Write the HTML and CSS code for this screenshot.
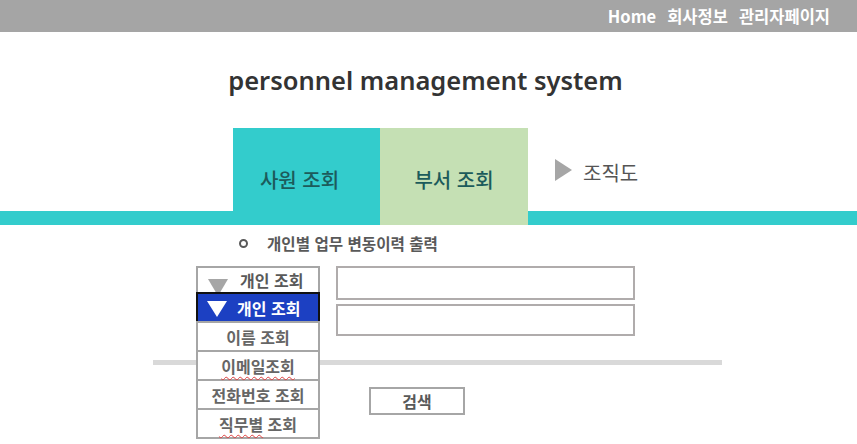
FILE: index.html
```html
<!DOCTYPE html>
<html lang="ko">
<head>
<meta charset="utf-8">
<title>personnel management system</title>
<link rel="stylesheet" href="styles.css">
</head>
<body>
<header class="topbar">
  <a class="toplink">Home</a>
  <a class="toplink">회사정보</a>
  <a class="toplink">관리자페이지</a>
</header>
<div class="title">personnel management system</div>
<nav class="nav">
  <div class="tab tab-teal">사원 조회</div>
  <div class="tab tab-green">부서 조회</div>
  <div class="tab tab-plain"><span class="play"></span>조직도</div>
</nav>
<main class="content">
  <div class="heading"><span class="ring"></span>개인별 업무 변동이력 출력</div>
  <div class="form-row">
    <div class="select">
      <div class="select-box"><span class="tri tri-gray"></span>개인 조회</div>
      <ul class="menu">
        <li class="opt opt-active"><span class="tri tri-white"></span>개인 조회</li>
        <li class="opt">이름 조회</li>
        <li class="opt"><span class="spell">이메일조회</span></li>
        <li class="opt">전화번호 조회</li>
        <li class="opt"><span><span class="spell">직무별</span> 조회</span></li>
      </ul>
    </div>
    <div class="inputs">
      <div class="field field-1"></div>
      <div class="field field-2"></div>
    </div>
  </div>
  <div class="divider"></div>
  <div class="btn-row"><div class="btn">검색</div></div>
</main>
</body>
</html>
```

FILE: styles.css
```css
* { box-sizing: border-box; }
html, body { min-height: 444px; }
body {
  margin: 0;
  font-family: "Noto Sans CJK KR", "Noto Sans", sans-serif;
  background: #fff;
  color: #333;
}
.topbar {
  height: 32px;
  background: #a5a5a5;
  display: flex;
  justify-content: flex-end;
  align-items: center;
  gap: 11px;
  padding-right: 27px;
}
.toplink {
  color: #fff;
  font-weight: 700;
  font-size: 16.5px;
  line-height: 1;
}
.title {
  height: 96px;
  display: flex;
  align-items: center;
  justify-content: center;
  font-family: "Noto Sans", "Noto Sans CJK KR", sans-serif;
  font-size: 25.5px;
  font-weight: 600;
  color: #333;
  padding-right: 6px;
}
.nav {
  height: 97px;
  display: flex;
  padding-left: 233px;
  background: linear-gradient(to top, #33cccc 14px, transparent 14px);
}
.tab {
  width: 147px;
  display: flex;
  align-items: center;
  justify-content: center;
  font-size: 20px;
  font-weight: 500;
  color: #1c5b5b;
  padding-top: 6px;
}
.tab-teal { background: #33cccc; padding-right: 14px; }
.tab-green { background: #c5e0b4; width: 148px; }
.tab-plain {
  background: transparent;
  color: #555;
  justify-content: flex-start;
  padding-left: 27px;
  width: auto;
  height: 83px;
  font-weight: 400;
}
.play {
  width: 0; height: 0;
  border-top: 11px solid transparent;
  border-bottom: 11px solid transparent;
  border-left: 17px solid #a6a6a6;
  margin-right: 11px;
  margin-top: -6px;
}
.content {
  padding-top: 7px;
}
.heading {
  display: flex;
  align-items: center;
  padding-left: 239px;
  font-size: 15.6px;
  font-weight: 700;
  color: #595959;
  height: 22px;
}
.ring {
  width: 9px; height: 9px;
  border: 2px solid #595959;
  border-radius: 50%;
  margin-right: 19px;
}
.form-row {
  display: flex;
  gap: 16px;
  padding-left: 196px;
  margin-top: 12px;
}
.select {
  position: relative;
  width: 124px;
}
.select-box {
  height: 28px;
  border: 2px solid #a6a6a6;
  display: flex;
  align-items: center;
  font-size: 16px;
  font-weight: 700;
  color: #595959;
  padding-left: 10px;
  background: #fff;
}
.tri {
  width: 0; height: 0;
  border-left: 10px solid transparent;
  border-right: 10px solid transparent;
  margin-right: 12px;
}
.tri-gray {
  border-top: 17px solid #a6a6a6;
  margin-top: 15px;
}
.tri-white {
  border-top: 16px solid #fff;
  margin-right: 10px;
  margin-top: 2px;
}
.menu {
  position: absolute;
  top: 26px;
  left: 0;
  width: 124px;
  margin: 0;
  padding: 0;
  list-style: none;
  background: #fff;
  z-index: 2;
}
.opt {
  height: 31px;
  border: 2px solid #a6a6a6;
  margin-top: -2px;
  display: flex;
  align-items: center;
  justify-content: center;
  font-size: 16px;
  font-weight: 700;
  color: #666;
  background: #fff;
}
.opt:first-child { margin-top: 0; }
.opt-active {
  background: #1c40c2;
  border: 2px solid #111;
  color: #fff;
  justify-content: flex-start;
  padding-left: 9px;
  height: 31px;
}
.spell {
  text-decoration: underline wavy #e04040;
  text-decoration-thickness: 1px;
  text-underline-offset: 3px;
}
.inputs {
  display: flex;
  flex-direction: column;
  gap: 4px;
}
.field {
  width: 299px;
  border: 2px solid #b0acac;
  background: #fff;
}
.field-1 { height: 34px; }
.field-2 { height: 32px; }
.divider {
  margin: 24px 0 0 153px;
  width: 569px;
  height: 5px;
  background: #d9d9d9;
}
.btn-row {
  padding-left: 369px;
  margin-top: 22px;
}
.btn {
  width: 96px;
  height: 28px;
  border: 2px solid #a6a6a6;
  display: flex;
  align-items: center;
  justify-content: center;
  font-size: 16px;
  font-weight: 700;
  color: #595959;
}
```
